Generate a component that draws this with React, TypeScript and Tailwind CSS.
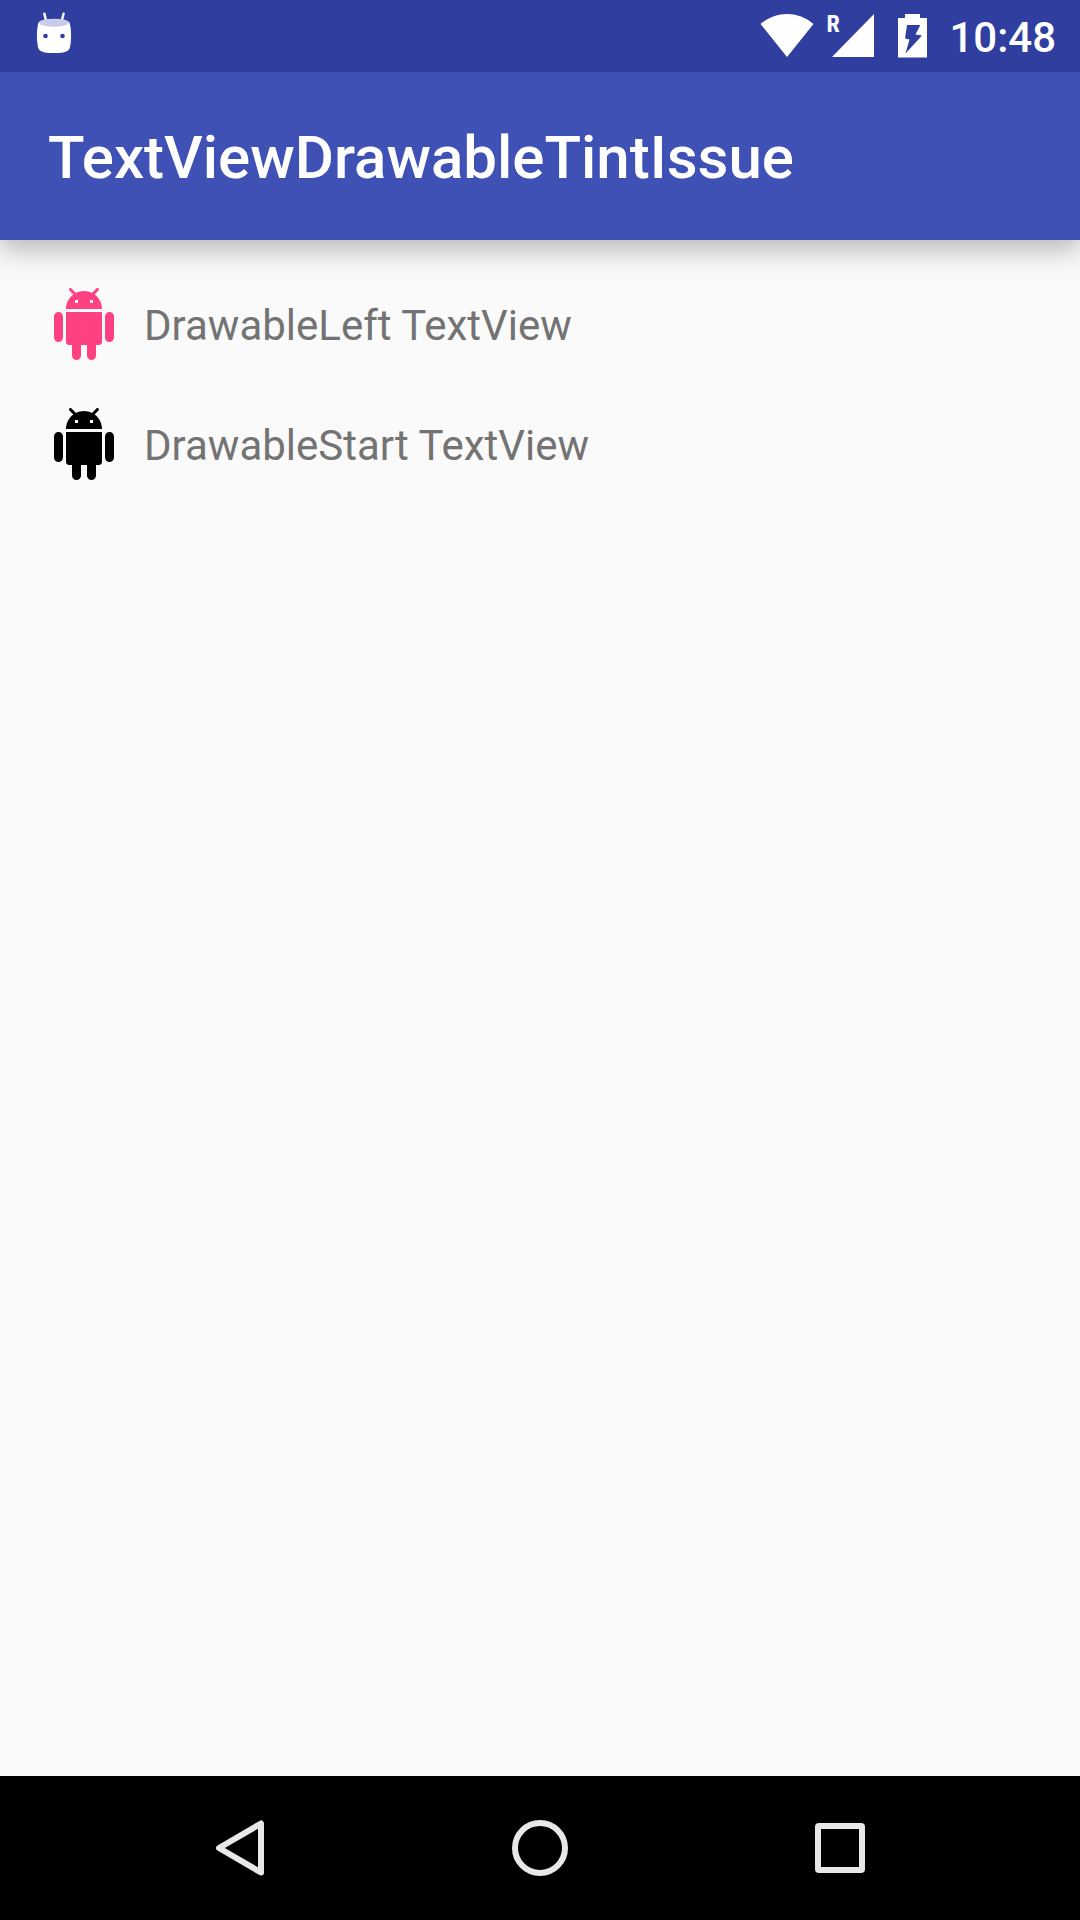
import React from "react";

function NotificationIcon() {
  return (
    <svg viewBox="0 0 72 72" className="size-[72px]" aria-label="Notification" role="img">
      <path d="M26.3 13.6L28.4 22M45.6 13.6L43.5 22" stroke="#fff" strokeWidth="2.4" strokeLinecap="round" />
      <path
        d="M20.5 22.5C24 18.5 48 18.5 51.500 22.5C53.500 29 53.500 40 52 47C51 51 48 53 36 53S21 51 20 47C18.500 40 18.500 29 20.500 22.500Z"
        fill="#fff"
      />
      <ellipse cx="36" cy="22.7" rx="14.8" ry="4" fill="#c9cce7" />
      <circle cx="27.5" cy="36" r="2.3" fill="#303f9f" />
      <circle cx="44.5" cy="36" r="2.3" fill="#303f9f" />
    </svg>
  );
}

function WifiIcon() {
  return (
    <svg viewBox="0 0 54 72" className="h-[72px] w-[54px]" aria-label="Wi-Fi" role="img">
      <path d="M0.500 24C16 10.700 38 10.700 53.500 24L27 57Z" fill="#fff" />
    </svg>
  );
}

function SignalIcon() {
  return (
    <div className="relative">
      <svg viewBox="0 0 46 72" className="h-[72px] w-[46px]" aria-label="Signal" role="img">
        <path d="M4 57L46 14V57Z" fill="#fff" />
      </svg>
      <span className="absolute top-3 -left-0.5 font-['Roboto_Condensed','Liberation_Sans_Narrow',Roboto,sans-serif] text-2xl leading-6 font-bold">
        R
      </span>
    </div>
  );
}

function BatteryIcon() {
  return (
    <svg viewBox="0 0 29 72" className="h-[72px] w-[29px]" aria-label="Battery charging" role="img">
      <path
        fillRule="evenodd"
        d="M7 14H22V18H29V57.500H0V18H7ZM9 25H22.300L17.500 34.500L24 35.500L7.500 53.500L11.500 39.500L7 38.500Z"
        fill="#fff"
      />
    </svg>
  );
}

function AndroidIcon({ className }: { className: string }) {
  return (
    <svg viewBox="0 0 24 24" className={className} fill="currentColor" aria-hidden="true">
      <path d="M6 18c0 .55.45 1 1 1h1v3.5c0 .83.67 1.5 1.5 1.5s1.5-.67 1.5-1.5V19h2v3.5c0 .83.67 1.5 1.5 1.5s1.5-.67 1.5-1.5V19h1c.55 0 1-.45 1-1V8H6v10zM3.5 8C2.67 8 2 8.67 2 9.5v7c0 .83.67 1.5 1.5 1.5S5 17.33 5 16.5v-7C5 8.67 4.33 8 3.5 8zm17 0c-.83 0-1.5.67-1.5 1.5v7c0 .83.67 1.5 1.5 1.5s1.5-.67 1.5-1.5v-7c0-.83-.67-1.5-1.5-1.5zm-4.97-5.84l1.3-1.3c.2-.2.2-.51 0-.71-.2-.2-.51-.2-.71 0l-1.48 1.48C13.85 1.23 12.95 1 12 1c-.96 0-1.86.23-2.66.63L7.85.15c-.2-.2-.51-.2-.71 0-.2.2-.2.51 0 .71l1.31 1.31C6.97 3.26 6 5.01 6 7h12c0-1.99-.97-3.75-2.47-4.84zM10 5H9V4h1v1zm5 0h-1V4h1v1z" />
    </svg>
  );
}

function NavButton({ label, children }: { label: string; children: React.ReactNode }) {
  return (
    <button type="button" aria-label={label} className="flex h-36 flex-1 items-center justify-center">
      <svg viewBox="0 0 72 72" className="size-[72px]" fill="none" stroke="#e8e8e8" strokeWidth="6" strokeLinejoin="round">
        {children}
      </svg>
    </button>
  );
}

export default function App() {
  return (
    <div className="flex min-h-screen flex-col bg-[#fafafa] font-[Roboto,sans-serif]">
      <header className="text-white shadow-[0_8px_28px_rgba(0,0,0,0.3)]">
        <div className="flex h-[72px] items-center justify-between bg-[#303f9f] pr-6 pl-[18px]">
          <NotificationIcon />
          <div className="flex items-center">
            <WifiIcon />
            <div className="ml-3.5">
              <SignalIcon />
            </div>
            <div className="ml-6">
              <BatteryIcon />
            </div>
            <time className="ml-[22px] pt-1 text-[42px] leading-[72px] font-medium">10:48</time>
          </div>
        </div>
        <div className="flex h-[168px] items-center bg-[#3f51b5] px-12">
          <h1 className="pt-1 text-[60px] leading-[72px] font-medium">TextViewDrawableTintIssue</h1>
        </div>
      </header>
      <main className="flex flex-1 flex-col gap-12 p-12">
        <div className="flex h-[72px] items-center gap-6">
          <AndroidIcon className="size-[72px] text-[#ff4081]" />
          <p className="pt-1 text-[42px] leading-[68px] text-[#737373]">DrawableLeft TextView</p>
        </div>
        <div className="flex h-[72px] items-center gap-6">
          <AndroidIcon className="size-[72px] text-black" />
          <p className="pt-1 text-[42px] leading-[68px] text-[#737373]">DrawableStart TextView</p>
        </div>
      </main>
      <nav className="flex bg-black px-[90px]" aria-label="System navigation">
        <NavButton label="Back">
          <path d="M15 36L57 11.500V60.500Z" />
        </NavButton>
        <NavButton label="Home">
          <circle cx="36" cy="36" r="25" />
        </NavButton>
        <NavButton label="Overview">
          <rect x="14" y="14" width="44" height="44" rx="1" />
        </NavButton>
      </nav>
    </div>
  );
}
